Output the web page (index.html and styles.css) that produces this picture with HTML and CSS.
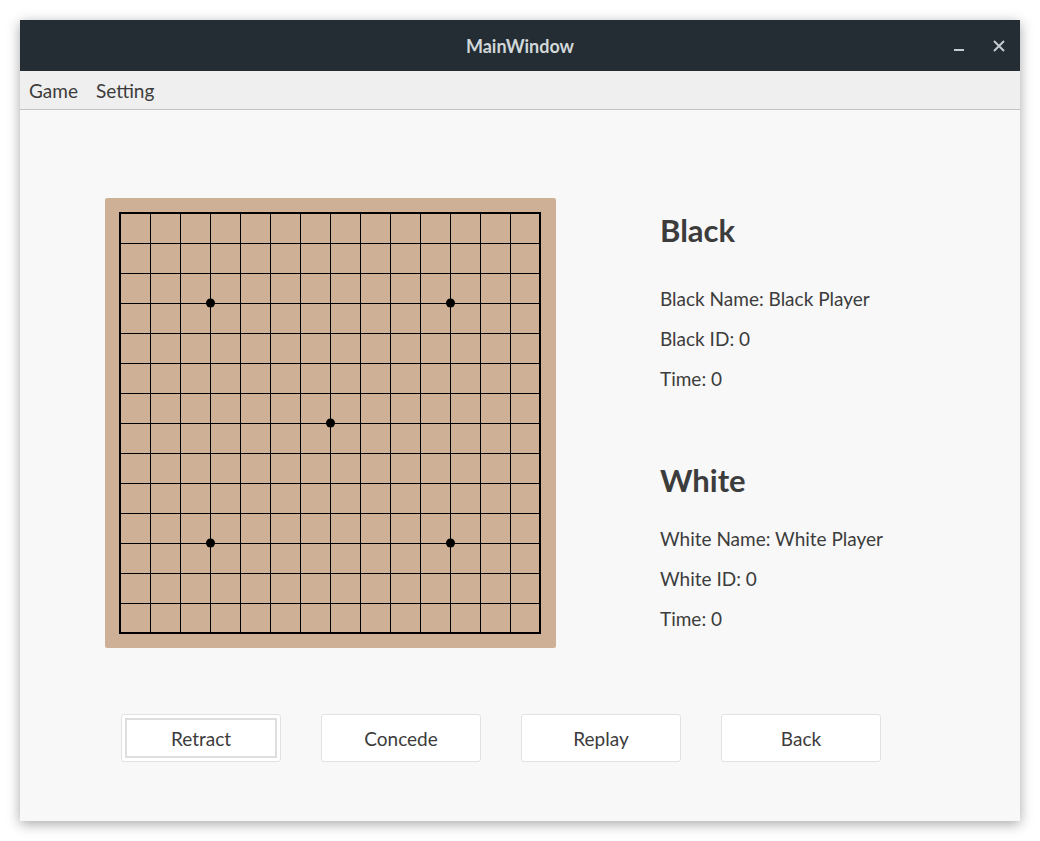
FILE: index.html
```html
<!DOCTYPE html>
<html>
<head>
<meta charset="utf-8">
<link rel="stylesheet" href="styles.css">
</head>
<body>
<div class="window">
  <div class="titlebar">
    <div class="title">MainWindow</div>
    <div class="controls">
      <svg class="ctl" width="12" height="12" viewBox="0 0 12 12"><rect x="1" y="9" width="10" height="2" fill="#c4cace"/></svg>
      <svg class="ctl" width="12" height="12" viewBox="0 0 12 12"><path d="M1 1 L11 11 M11 1 L1 11" stroke="#c4cace" stroke-width="2"/></svg>
    </div>
  </div>
  <div class="menubar">
    <span class="menu-item">Game</span>
    <span class="menu-item">Setting</span>
  </div>
  <div class="content">
    <div class="top-row">
      <div class="board">
        <svg width="451" height="450" viewBox="0 0 451 450">
          <g stroke="#000" stroke-width="1" shape-rendering="crispEdges">
            <path d="M45.5 15V435M75.5 15V435M105.5 15V435M135.5 15V435M165.5 15V435M195.5 15V435M225.5 15V435M255.5 15V435M285.5 15V435M315.5 15V435M345.5 15V435M375.5 15V435M405.5 15V435"/>
            <path d="M15 45.5H435M15 75.5H435M15 105.5H435M15 135.5H435M15 165.5H435M15 195.5H435M15 225.5H435M15 255.5H435M15 285.5H435M15 315.5H435M15 345.5H435M15 375.5H435M15 405.5H435"/>
          </g>
          <rect x="15" y="15" width="420" height="420" fill="none" stroke="#000" stroke-width="2" shape-rendering="crispEdges"/>
          <g fill="#000">
            <circle cx="105.5" cy="105" r="4.5"/>
            <circle cx="345.5" cy="105" r="4.5"/>
            <circle cx="225.5" cy="225" r="4.5"/>
            <circle cx="105.5" cy="345" r="4.5"/>
            <circle cx="345.5" cy="345" r="4.5"/>
          </g>
        </svg>
      </div>
      <div class="info">
        <div class="player">
          <h2 class="player-title">Black</h2>
          <div class="line">Black Name: Black Player</div>
          <div class="line">Black ID: 0</div>
          <div class="line">Time: 0</div>
        </div>
        <div class="player white">
          <h2 class="player-title">White</h2>
          <div class="line">White Name: White Player</div>
          <div class="line">White ID: 0</div>
          <div class="line">Time: 0</div>
        </div>
      </div>
    </div>
    <div class="buttons">
      <button class="btn focused"><span>Retract</span></button>
      <button class="btn"><span>Concede</span></button>
      <button class="btn"><span>Replay</span></button>
      <button class="btn"><span>Back</span></button>
    </div>
  </div>
</div>
</body>
</html>
```
FILE: styles.css
```css
html, body {
  margin: 0;
  padding: 0;
  background: #ffffff;
}
body {
  width: 1040px;
  height: 841px;
  overflow: hidden;
  font-family: Lato, "Open Sans", sans-serif;
  color: #3c3c3c;
}
.window {
  position: relative;
  margin: 20px 0 0 20px;
  width: 1000px;
  height: 801px;
  background: #f8f8f8;
  box-shadow: 0 3px 12px rgba(0,0,0,0.35);
  display: flex;
  flex-direction: column;
}
.titlebar {
  height: 51px;
  background: #232d33;
  display: flex;
  align-items: center;
  justify-content: center;
  position: relative;
}
.title {
  color: #d2d7da;
  font-weight: bold;
  font-size: 18px;
}
.controls {
  position: absolute;
  right: 15px;
  top: 20px;
  display: flex;
  gap: 28px;
}
.ctl { display: block; }
.menubar {
  height: 38px;
  background: #efefef;
  border-bottom: 1px solid #c4c4c4;
  display: flex;
  align-items: center;
  padding-left: 9px;
  gap: 18px;
  font-size: 19px;
  color: #3c3c3c;
}
.content {
  flex: 1;
  display: flex;
  flex-direction: column;
}
.top-row {
  display: flex;
  padding-top: 88px;
  padding-left: 85px;
}
.board {
  width: 451px;
  height: 450px;
  background: #cdb096;
  border-radius: 2px;
}
.board svg { display: block; }
.info {
  margin-left: 104px;
  padding-top: 12px;
}
.player-title {
  margin: 0;
  font-size: 31px;
  font-weight: bold;
  line-height: 40px;
  color: #3c3c3c;
}
.line {
  font-size: 19px;
  line-height: 40px;
}
.player .player-title { margin-bottom: 29px; }
.white { margin-top: 61px; }
.player.white .player-title { margin-bottom: 19px; }
.buttons {
  display: flex;
  gap: 40px;
  padding-left: 101px;
  margin-top: 66px;
}
.btn {
  width: 160px;
  height: 48px;
  background: #ffffff;
  border: 1px solid #e2e2e2;
  border-radius: 3px;
  font-family: inherit;
  font-size: 19px;
  color: #3c3c3c;
  padding: 0;
  display: flex;
  align-items: center;
  justify-content: center;
}
.btn.focused {
  padding: 3px;
}
.btn.focused span {
  flex: 1;
  align-self: stretch;
  display: flex;
  align-items: center;
  justify-content: center;
  border: 2px solid #dedede;
}
```
